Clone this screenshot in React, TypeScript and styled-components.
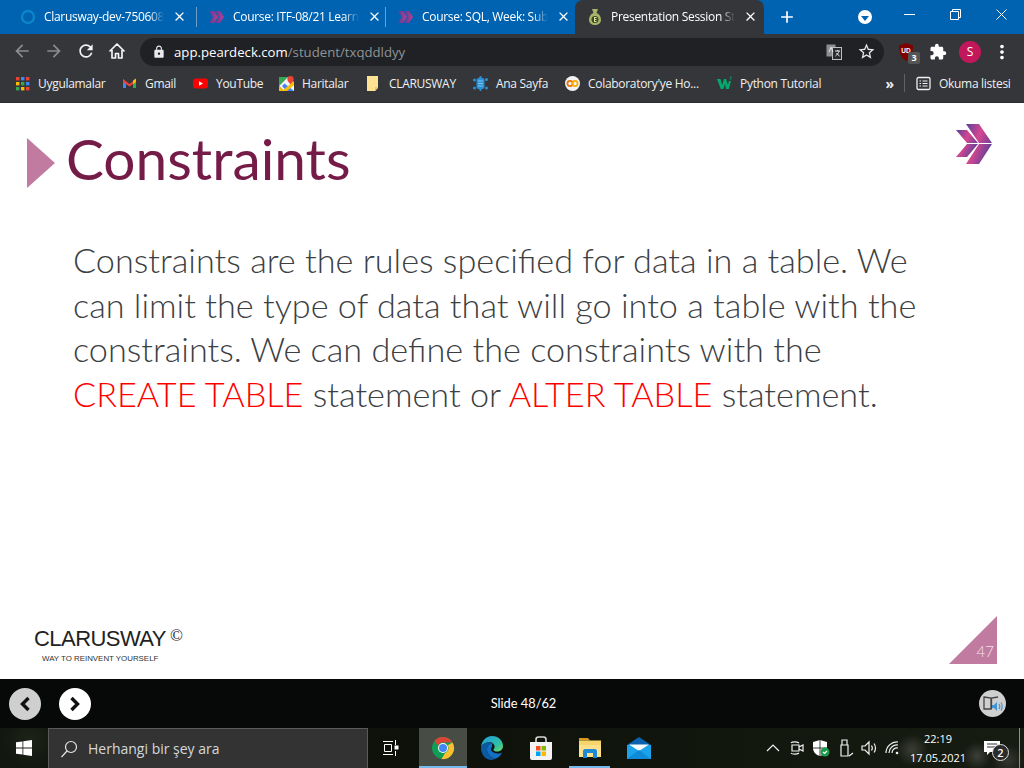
import React from 'react';
import styled, { createGlobalStyle } from 'styled-components';
import {
  MdAdd,
  MdArrowBack,
  MdArrowForward,
  MdClose,
  MdExtension,
  MdLock,
  MdMoreVert,
  MdRefresh,
  MdStarBorder,
} from 'react-icons/md';

const GlobalStyle = createGlobalStyle`
  html, body { margin: 0; padding: 0; background: #fff; }
  body { font-family: "Open Sans", "Liberation Sans", sans-serif; overflow: hidden; }
`;

const Screen = styled.div`
  width: 1024px;
  height: 768px;
  display: flex;
  flex-direction: column;
  overflow: hidden;
`;

/* ---------- browser chrome ---------- */

const TabStrip = styled.div`
  height: 34px;
  background: #0063b1;
  display: flex;
  align-items: stretch;
  padding-left: 8px;
  color: #fff;
`;

const Tab = styled.div<{ $active?: boolean; $divider?: boolean }>`
  position: relative;
  width: 189px;
  box-sizing: border-box;
  display: flex;
  align-items: center;
  padding: 0 10px 1px 12px;
  gap: 8px;
  font-size: 12px;
  background: ${(p) => (p.$active ? '#35363a' : 'transparent')};
  border-radius: ${(p) => (p.$active ? '8px 8px 0 0' : '0')};
  &::after {
    content: '';
    display: ${(p) => (p.$divider ? 'block' : 'none')};
    position: absolute;
    right: 0;
    top: 7px;
    bottom: 7px;
    width: 1px;
    background: #6d9fc9;
  }
`;

const TabIcon = styled.svg`
  width: 16px;
  height: 16px;
  flex: none;
`;

const TabTitle = styled.span`
  flex: 1;
  white-space: nowrap;
  -webkit-mask-image: linear-gradient(90deg, #000 88%, transparent 100%);
  mask-image: linear-gradient(90deg, #000 88%, transparent 100%);
  letter-spacing: -0.3px;
`;

const TabClose = styled(MdClose)`
  font-size: 15px;
  flex: none;
`;

const NewTab = styled(MdAdd)`
  font-size: 20px;
  margin: 7px 0 0 13px;
`;

const StripRight = styled.div`
  margin-left: auto;
  display: flex;
  align-items: flex-start;
`;

const ProfileMenu = styled.div`
  width: 14px;
  height: 14px;
  border-radius: 50%;
  background: #fff;
  margin: 10px 14px 0 0;
  display: flex;
  align-items: center;
  justify-content: center;
  &::after {
    content: '';
    border-left: 4px solid transparent;
    border-right: 4px solid transparent;
    border-top: 5px solid #0063b1;
    margin-top: 2px;
  }
`;

const WindowButton = styled.div`
  width: 46px;
  height: 28px;
  display: flex;
  align-items: center;
  justify-content: center;
`;

const Toolbar = styled.div`
  height: 32px;
  background: #35363a;
  display: flex;
  align-items: flex-end;
  box-sizing: border-box;
  padding-left: 12px;
  color: #fff;
`;

const NavButton = styled.div<{ $dim?: boolean }>`
  width: 32px;
  height: 30px;
  display: flex;
  align-items: center;
  justify-content: flex-start;
  font-size: 20px;
  color: ${(p) => (p.$dim ? '#8b8c8e' : '#f1f3f4')};
`;

const Omnibox = styled.div`
  width: 744px;
  height: 28px;
  background: #202124;
  border-radius: 14px;
  display: flex;
  align-items: center;
  padding: 0 2px 1px 12px;
  box-sizing: border-box;
  font-size: 13.2px;
`;

const Url = styled.span`
  margin-left: 8px;
  color: #fff;
  flex: 1;
  em { font-style: normal; color: #8f9499; }
`;

const OmniIcon = styled.div`
  width: 32px;
  display: flex;
  justify-content: center;
  align-items: center;
  color: #e8eaed;
`;

const ExtensionRow = styled.div`
  display: flex;
  align-items: center;
  height: 28px;
  margin-left: 6px;
`;

const ExtSlot = styled.div`
  position: relative;
  width: 32px;
  display: flex;
  justify-content: center;
  align-items: center;
`;

const CountBadge = styled.span`
  position: absolute;
  left: 18px;
  top: 9px;
  width: 12px;
  height: 12px;
  background: #555;
  border-radius: 2px;
  font-size: 9px;
  font-weight: 700;
  line-height: 12px;
  text-align: center;
`;

const Avatar = styled.div`
  width: 22px;
  height: 22px;
  border-radius: 50%;
  background: #c2185b;
  font-size: 12px;
  line-height: 22px;
  text-align: center;
`;

const Bookmarks = styled.div`
  height: 37px;
  background: #35363a;
  border-bottom: 1px solid #2a2b2e;
  box-sizing: border-box;
  display: flex;
  align-items: center;
  padding: 0 0 2px 15px;
  color: #eef0f1;
  font-size: 12px;
`;

const Bookmark = styled.div<{ $w: number }>`
  width: ${(p) => p.$w}px;
  flex: none;
  display: flex;
  align-items: center;
  gap: 8px;
  white-space: nowrap;
  letter-spacing: -0.3px;
`;

const BookmarkIcon = styled.svg`
  width: 15px;
  height: 15px;
  flex: none;
`;

const Chevrons = styled.span`
  margin-left: auto;
  font-size: 14px;
  font-weight: 700;
`;

const BarDivider = styled.span`
  width: 1px;
  height: 18px;
  background: #5f6368;
  margin: 0 11px 0 10px;
`;

/* ---------- slide ---------- */

const Slide = styled.main`
  flex: 1;
  background: #fff;
  display: flex;
  flex-direction: column;
`;

const SlideHead = styled.header`
  display: flex;
  align-items: flex-start;
  height: 135px;
  padding: 35px 31px 0 27px;
  box-sizing: border-box;
`;

const TitleMark = styled.div`
  width: 0;
  height: 0;
  border-left: 28px solid #c27ba0;
  border-top: 25px solid transparent;
  border-bottom: 25px solid transparent;
  margin-right: 11px;
`;

const Title = styled.h1`
  margin: -5px 0 0;
  flex: 1;
  font-family: "Lato", sans-serif;
  font-weight: 400;
  font-size: 56.8px;
  line-height: 50px;
  color: #741b47;
`;

const HeadLogo = styled.svg`
  width: 38px;
  height: 42px;
  margin-top: -15px;
`;

const Body = styled.p`
  margin: 0;
  padding-left: 73px;
  flex: 1;
  font-family: "Lato", sans-serif;
  font-weight: 300;
  font-size: 34.24px;
  line-height: 44.5px;
  color: #3c4043;
  white-space: nowrap;
`;

const Keyword = styled.span`
  color: #ff0000;
`;

const SlideFoot = styled.footer`
  display: flex;
  justify-content: space-between;
  align-items: flex-end;
  padding: 0 27px 15px 34px;
`;

const Brand = styled.div`
  color: #222;
  font-family: "Liberation Sans", sans-serif;
`;

const BrandName = styled.div`
  font-size: 22px;
  line-height: 24px;
  letter-spacing: -0.55px;
  sup {
    font-family: "Liberation Serif", serif;
    font-size: 17px;
    line-height: 0;
    vertical-align: 5px;
    margin-left: 4px;
    letter-spacing: 0;
  }
`;

const BrandTag = styled.div`
  font-size: 7.9px;
  line-height: 11px;
  margin: 2px 0 0 8px;
  color: #333;
`;

const Corner = styled.div`
  width: 48px;
  height: 48px;
  background: #c27ba0;
  clip-path: polygon(100% 0, 100% 100%, 0 100%);
  color: #f4e4ec;
  font-family: "Lato", sans-serif;
  font-weight: 300;
  font-size: 15px;
  display: flex;
  align-items: flex-end;
  justify-content: flex-end;
  padding: 0 3px 4px 0;
  box-sizing: border-box;
`;

/* ---------- deck controls ---------- */

const DeckBar = styled.div`
  height: 49px;
  background: #070909;
  display: flex;
  align-items: center;
  padding: 0 18px 0 9px;
  color: #fff;
`;

const DeckButton = styled.div<{ $on?: boolean }>`
  width: 32px;
  height: 32px;
  border-radius: 50%;
  background: ${(p) => (p.$on ? '#fff' : '#cfcfcf')};
  margin-right: 18px;
  display: flex;
  align-items: center;
  justify-content: center;
`;

const SlideCount = styled.div`
  flex: 1;
  text-align: center;
  font-family: "Lato", sans-serif;
  font-size: 12.8px;
  padding: 0 41px 1px 0;
`;

const AudioButton = styled.div`
  width: 27px;
  height: 27px;
  border-radius: 50%;
  background: #cfcfcf;
  display: flex;
  align-items: center;
  justify-content: center;
`;

/* ---------- windows taskbar ---------- */

const Taskbar = styled.div`
  height: 40px;
  display: flex;
  align-items: center;
  color: #fff;
  background:
    radial-gradient(circle at 912px 22px, #3a3d34 0, transparent 16px),
    radial-gradient(circle at 977px 28px, #3c3f38 0, transparent 14px),
    radial-gradient(circle at 1008px 32px, #34362f 0, transparent 16px),
    radial-gradient(circle at 30px 12px, #1d2318 0, transparent 30px),
    linear-gradient(90deg, #12170f, #0d1109 40%, #171c12);
`;

const StartButton = styled.div`
  width: 48px;
  display: flex;
  justify-content: center;
`;

const SearchBox = styled.div`
  width: 320px;
  height: 40px;
  box-sizing: border-box;
  background: #333;
  border: 1px solid #5a5a5a;
  border-bottom: none;
  display: flex;
  align-items: center;
  padding-left: 11px;
  gap: 10px;
  font-size: 14px;
  color: #d4d8dc;
`;

const TaskIcons = styled.div`
  display: flex;
  height: 40px;
  margin-left: 2px;
`;

const TaskItem = styled.div<{ $active?: boolean; $open?: boolean; $shift?: number }>`
  position: relative;
  width: ${(p) => (p.$active ? 48 : 49)}px;
  box-sizing: border-box;
  padding-right: ${(p) => p.$shift ?? 0}px;
  display: flex;
  align-items: center;
  justify-content: center;
  background: ${(p) => (p.$active ? '#474c44' : 'transparent')};
  &::after {
    content: '';
    display: ${(p) => (p.$active || p.$open ? 'block' : 'none')};
    position: absolute;
    left: ${(p) => (p.$open ? '4px' : '0')};
    right: ${(p) => (p.$open ? '4px' : '0')};
    bottom: 0;
    height: 2px;
    background: #76b9ed;
  }
`;

const Tray = styled.div`
  margin-left: auto;
  display: flex;
  align-items: center;
  height: 40px;
`;

const TrayIcon = styled.div`
  width: 24px;
  display: flex;
  justify-content: center;
`;

const Clock = styled.div`
  width: 58px;
  margin-left: 4px;
  text-align: center;
  font-size: 11px;
  line-height: 19px;
  white-space: nowrap;
`;

const Notify = styled.div`
  position: relative;
  width: 42px;
  margin-left: 4px;
  margin-right: 6px;
  display: flex;
  justify-content: center;
`;

const NotifyBadge = styled.span`
  position: absolute;
  left: 21px;
  top: 5px;
  width: 15px;
  height: 15px;
  border-radius: 50%;
  background: #2c2c2c;
  border: 1px solid #ddd;
  font-size: 11px;
  font-weight: 600;
  line-height: 15px;
  text-align: center;
`;

const DesktopEdge = styled.span`
  width: 1px;
  height: 40px;
  background: #8d8d8a;
  margin-right: 4px;
`;

/* ---------- drawings ---------- */

const Chevron = ({ id }: { id: string }) => (
  <TabIcon viewBox="0 0 16 16">
    <defs>
      <linearGradient id={id} x1="0" x2="1">
        <stop offset="0" stopColor="#5a3c9a" />
        <stop offset="1" stopColor="#b8408f" />
      </linearGradient>
    </defs>
    <path d="M0 2h5l4 6-4 6H0l4-6z" fill={`url(#${id})`} />
    <path d="M6 2h5l4 6-4 6H6l4-6z" fill={`url(#${id})`} />
  </TabIcon>
);

const tabs = [
  {
    title: 'Clarusway-dev-750608',
    icon: (
      <TabIcon viewBox="0 0 16 16">
        <circle cx="8" cy="8" r="6" fill="none" stroke="#0b86c9" strokeWidth="2.4" />
      </TabIcon>
    ),
    divider: true,
  },
  { title: 'Course: ITF-08/21 Learn', icon: <Chevron id="tabA" />, divider: true },
  { title: 'Course: SQL, Week: Sub', icon: <Chevron id="tabB" /> },
  {
    title: 'Presentation Session St',
    active: true,
    icon: (
      <TabIcon viewBox="0 0 16 16">
        <path d="M5 0h6L9.500 4c3 1 4.500 4 4.500 7 0 3-3 5-6 5s-6-2-6-5c0-3 1.500-6 4.500-7z" fill="#a9b46a" />
        <circle cx="8" cy="10.500" r="3.500" fill="#3d4a22" />
        <path d="M7 8h2.500v1H8v1h1.500v1H8v1h1.500v1H7z" fill="#d8df9f" />
      </TabIcon>
    ),
  },
];

const AppsIcon = () => {
  const colours = ['#ea4335', '#4285f4', '#ea4335', '#fbbc04', '#34a853', '#4285f4', '#34a853', '#fbbc04', '#ea4335'];
  return (
    <BookmarkIcon viewBox="0 0 15 15">
      {colours.map((c, i) => (
        <rect key={i} x={1 + (i % 3) * 5} y={1 + Math.floor(i / 3) * 5} width="3.4" height="3.4" fill={c} />
      ))}
    </BookmarkIcon>
  );
};

const bookmarks = [
  { label: 'Uygulamalar', w: 107, icon: <AppsIcon /> },
  {
    label: 'Gmail',
    w: 71,
    icon: (
      <BookmarkIcon viewBox="0 0 15 15">
        <path d="M1 3v9h3V6z" fill="#4285f4" />
        <path d="M14 3v9h-3V6z" fill="#34a853" />
        <path d="M1 3l6.500 5L14 3v3L7.500 10.500 1 6z" fill="#ea4335" />
        <path d="M11 4.500L14 2.600V6l-3 2.200z" fill="#fbbc04" />
      </BookmarkIcon>
    ),
  },
  {
    label: 'YouTube',
    w: 86,
    icon: (
      <BookmarkIcon viewBox="0 0 15 15">
        <rect y="2.500" width="15" height="10" rx="3" fill="#f00" />
        <path d="M6 5.200l4 2.300-4 2.300z" fill="#fff" />
      </BookmarkIcon>
    ),
  },
  {
    label: 'Haritalar',
    w: 87,
    icon: (
      <BookmarkIcon viewBox="0 0 15 15">
        <path d="M0 1h9l-9 9z" fill="#34a853" />
        <path d="M0 10L9 1l6 6v8H5z" fill="#f4f4f4" />
        <path d="M0 10l5 5H0z" fill="#fbbc04" />
        <path d="M5.500 7.500L15 15H7.500L3 10z" fill="#4285f4" />
        <path d="M3 15L15 5v4l-7 6z" fill="#fbbc04" />
        <path d="M11.500 0a3.200 3.200 0 0 1 3.200 3.200c0 2-3.200 5-3.200 5s-3.200-3-3.200-5A3.200 3.200 0 0 1 11.500 0z" fill="#ea4335" />
      </BookmarkIcon>
    ),
  },
  {
    label: 'CLARUSWAY',
    w: 107,
    icon: (
      <BookmarkIcon viewBox="0 0 15 15">
        <path d="M1 0h11v12l-3 3H1z" fill="#fde293" />
        <path d="M12 11l-3 4v-4z" fill="#e3c56a" />
      </BookmarkIcon>
    ),
  },
  {
    label: 'Ana Sayfa',
    w: 92,
    icon: (
      <BookmarkIcon viewBox="0 0 15 15">
        <g fill="#2a8fd6">
          <rect x="3.500" y="2" width="8" height="11" rx="2" />
          <circle cx="1.500" cy="4" r="1.500" />
          <circle cx="13.500" cy="3.500" r="1.500" />
          <circle cx="1.500" cy="12" r="1.500" />
          <circle cx="13.500" cy="12" r="1.500" />
          <circle cx="7.500" cy="1.200" r="1.200" />
          <circle cx="7.500" cy="13.800" r="1.200" />
        </g>
        <path d="M5 5h5M5 7.500h5M5 10h5" stroke="#7cc8f2" />
      </BookmarkIcon>
    ),
  },
  {
    label: "Colaboratory'ye Ho...",
    w: 152,
    icon: (
      <BookmarkIcon viewBox="0 0 15 15">
        <circle cx="7.500" cy="7.500" r="7.500" fill="#f2f2f2" />
        <circle cx="5" cy="7.500" r="2.600" fill="none" stroke="#e8710a" strokeWidth="1.700" />
        <circle cx="10" cy="7.500" r="2.600" fill="none" stroke="#f9ab00" strokeWidth="1.700" />
      </BookmarkIcon>
    ),
  },
  {
    label: 'Python Tutorial',
    w: 140,
    icon: (
      <BookmarkIcon viewBox="0 0 15 15">
        <path d="M0 3h3.400l1.800 6L7 3h2l1.800 6 1.200-4h2l-2.200 8h-2.600L8 8l-1.600 5H3.800z" fill="#04aa6d" />
        <path d="M12.500 1h2L13.500 2c1 0 1 1.700-.5 1.700" fill="none" stroke="#04aa6d" strokeWidth=".7" />
      </BookmarkIcon>
    ),
  },
];

const TileLogo = styled.svg`
  width: 24px;
  height: 24px;
`;

const ChromeLogo = () => (
  <TileLogo viewBox="0 0 24 24">
    <circle cx="12" cy="12" r="11" fill="#0f9d58" />
    <path d="M12 1a11 11 0 0 1 9.500 5.500H12a5.500 5.500 0 0 0-5 3.200L3.300 5A11 11 0 0 1 12 1z" fill="#db4437" />
    <path d="M21.500 6.500A11 11 0 0 1 10.500 23l3.400-5.800a5.500 5.500 0 0 0 2.800-8z" fill="#fbc02d" />
    <circle cx="12" cy="12" r="5" fill="#fff" />
    <circle cx="12" cy="12" r="4" fill="#4285f4" />
  </TileLogo>
);

const EdgeLogo = () => (
  <TileLogo viewBox="0 0 24 24">
    <defs>
      <linearGradient id="edgeTop" x1="0" y1="0" x2="1" y2="1">
        <stop offset="0" stopColor="#1b9de2" />
        <stop offset="0.7" stopColor="#35c1a0" />
        <stop offset="1" stopColor="#7bdc5c" />
      </linearGradient>
    </defs>
    <path d="M1 12C1 5 6 0 12 0c6.500 0 11 4.600 11 10 0 3.600-3 5.600-6 5.600-2 0-3.600-.7-3.600-1.800 0-.8 1.200-1.200 1.200-3 0-2.600-2.300-4.500-5-4.500C5 6.300 1 9 1 12z" fill="url(#edgeTop)" />
    <path d="M1 12c0-3 4-5.700 8.600-5.700 1 0 2 .3 2.800.8-3 .3-5.400 3-5.400 6.400 0 4 3 8 8.500 9.300C14 23.400 13 24 11.500 24 5.500 24 1 18.500 1 12z" fill="#0c59a4" />
    <path d="M12.400 7.100c-3 .3-5.400 3-5.400 6.400 0 4 3 8 8.500 9.300 2.800-.9 5.500-3.300 6.500-6.300-1 .6-2.400 1-4 1-4.500 0-7-2.600-7-4.200 0-1 .7-1.500 1.200-2.800-.1-1.500-.1-2.400.2-3.400z" fill="#1170c4" />
  </TileLogo>
);

const StoreLogo = () => (
  <TileLogo viewBox="0 0 24 24">
    <path d="M7 7V3.500C7 2 8 1 9.500 1h5C16 1 17 2 17 3.500V7" fill="none" stroke="#d8d8d8" strokeWidth="1.600" />
    <path d="M1 6h22v16a2 2 0 0 1-2 2H3a2 2 0 0 1-2-2z" fill="#f3f3f3" />
    <rect x="7" y="10" width="4.500" height="4.500" fill="#f25022" />
    <rect x="12.500" y="10" width="4.500" height="4.500" fill="#7fba00" />
    <rect x="7" y="15.500" width="4.500" height="4.500" fill="#00a4ef" />
    <rect x="12.500" y="15.500" width="4.500" height="4.500" fill="#ffb900" />
  </TileLogo>
);

const ExplorerLogo = () => (
  <TileLogo viewBox="0 0 24 24">
    <path d="M1 2h9l2 2.500H1z" fill="#d99a1c" />
    <path d="M1 4.500h22V20H1z" fill="#f8d56b" />
    <path d="M1 9h22v12H1z" fill="#ffe08a" />
    <path d="M5 22v-7c0-1 1-2 2-2h10c1 0 2 1 2 2v7h-4v-5H9v5z" fill="#1c8ad4" />
  </TileLogo>
);

const MailLogo = () => (
  <TileLogo viewBox="0 0 24 24">
    <path d="M12 1l12 8v14H0V9z" fill="#0a62b0" />
    <path d="M0 9h24v14H0z" fill="#1aa3ea" />
    <path d="M2 8.500h20L12 15z" fill="#f5fbff" />
    <path d="M0 23L12 14l12 9z" fill="#0f8ad6" />
  </TileLogo>
);

const TrayGlyph = styled.svg`
  width: 18px;
  height: 18px;
  fill: none;
  stroke: #f2f2f2;
  stroke-width: 1.2;
`;

export default function App() {
  return (
    <Screen>
      <GlobalStyle />
      <TabStrip>
        {tabs.map((t) => (
          <Tab key={t.title} $active={t.active} $divider={t.divider}>
            {t.icon}
            <TabTitle>{t.title}</TabTitle>
            <TabClose />
          </Tab>
        ))}
        <NewTab />
        <StripRight>
          <ProfileMenu />
          <WindowButton>
            <svg width="11" height="11" viewBox="0 0 11 11">
              <path d="M0 5.500h11" stroke="#fff" />
            </svg>
          </WindowButton>
          <WindowButton>
            <svg width="11" height="11" viewBox="0 0 11 11" fill="none" stroke="#fff">
              <path d="M.5 2.500h8v8h-8zM2.500 2.500v-2h8v8h-2" />
            </svg>
          </WindowButton>
          <WindowButton>
            <svg width="11" height="11" viewBox="0 0 11 11" stroke="#fff">
              <path d="M.5.500l10 10M10.500.500l-10 10" />
            </svg>
          </WindowButton>
        </StripRight>
      </TabStrip>

      <Toolbar>
        <NavButton $dim><MdArrowBack /></NavButton>
        <NavButton $dim><MdArrowForward /></NavButton>
        <NavButton><MdRefresh /></NavButton>
        <NavButton>
          <svg width="18" height="18" viewBox="0 0 18 18" fill="none" stroke="#f1f3f4" strokeWidth="1.700">
            <path d="M1.500 9.500L9 2l7.500 7.500M4 8v8h3.500v-4.500h3V16H14V8" strokeLinejoin="round" />
          </svg>
        </NavButton>
        <Omnibox>
          <MdLock size={14} color="#e8eaed" />
          <Url>app.peardeck.com<em>/student/txqddldyy</em></Url>
          <OmniIcon>
            <svg width="16" height="16" viewBox="0 0 16 16">
              <rect x="0.500" y="0.500" width="9" height="12" fill="#8d8f91" />
              <rect x="6.500" y="3.500" width="9" height="12" fill="#2a2b2e" stroke="#bdbfc1" />
              <path d="M3 8l2-5 2 5M9 7h5M11.500 6v1M13 7c-.5 2-2 4-3.500 5M10.500 9c.8 1.200 2 2.300 3 3" stroke="#e5e5e5" fill="none" />
            </svg>
          </OmniIcon>
          <OmniIcon><MdStarBorder size={19} /></OmniIcon>
        </Omnibox>
        <ExtensionRow>
          <ExtSlot>
            <svg width="16" height="18" viewBox="0 0 16 18">
              <path d="M8 0l7 2.500c0 7-1.500 12-7 15.500C2.500 14.500 1 9.500 1 2.500z" fill="#800000" />
              <text x="8" y="9.500" fontSize="6.500" fontWeight="700" fill="#fff" textAnchor="middle" fontFamily="Liberation Sans">UD</text>
            </svg>
            <CountBadge>3</CountBadge>
          </ExtSlot>
          <ExtSlot><MdExtension size={18} /></ExtSlot>
          <ExtSlot><Avatar>S</Avatar></ExtSlot>
          <ExtSlot><MdMoreVert size={22} /></ExtSlot>
        </ExtensionRow>
      </Toolbar>

      <Bookmarks>
        {bookmarks.map((b) => (
          <Bookmark key={b.label} $w={b.w}>
            {b.icon}
            <span>{b.label}</span>
          </Bookmark>
        ))}
        <Chevrons>»</Chevrons>
        <BarDivider />
        <Bookmark $w={108}>
          <BookmarkIcon viewBox="0 0 15 15" fill="none" stroke="#eef0f1">
            <rect x="1" y="1.500" width="13" height="12" rx="1.500" strokeWidth="1.300" />
            <path d="M3.500 5h1.500M6.500 5h5M3.500 7.500h1.500M6.500 7.500h5M3.500 10h1.500M6.500 10h5" />
          </BookmarkIcon>
          <span>Okuma listesi</span>
        </Bookmark>
      </Bookmarks>

      <Slide>
        <SlideHead>
          <TitleMark />
          <Title>Constraints</Title>
          <HeadLogo viewBox="0 0 38 42">
            <defs>
              <linearGradient id="headLogo" x1="0" x2="1" y1="0" y2="0.600">
                <stop offset="0" stopColor="#5b3f9c" />
                <stop offset="0.5" stopColor="#d6478f" />
                <stop offset="1" stopColor="#5b3f9c" />
              </linearGradient>
            </defs>
            <path d="M1 7h11l11 13H12zM1 34h11l11-13H12z" fill="url(#headLogo)" />
            <path d="M11 1h13l13 19H24zM11 41h13l13-20H24z" fill="url(#headLogo)" />
          </HeadLogo>
        </SlideHead>
        <Body>
          Constraints are the rules specified for data in a table. We<br />
          can limit the type of data that will go into a table with the<br />
          constraints. We can define the constraints with the<br />
          <Keyword>CREATE TABLE</Keyword> statement or <Keyword>ALTER TABLE</Keyword> statement.
        </Body>
        <SlideFoot>
          <Brand>
            <BrandName>CLARUSWAY<sup>©</sup></BrandName>
            <BrandTag>WAY TO REINVENT YOURSELF</BrandTag>
          </Brand>
          <Corner>47</Corner>
        </SlideFoot>
      </Slide>

      <DeckBar>
        <DeckButton>
          <svg width="12" height="16" viewBox="0 0 12 16" fill="none" stroke="#111" strokeWidth="3.400">
            <path d="M9.500 2L3.500 8l6 6" />
          </svg>
        </DeckButton>
        <DeckButton $on>
          <svg width="12" height="16" viewBox="0 0 12 16" fill="none" stroke="#111" strokeWidth="3.400">
            <path d="M2.500 2l6 6-6 6" />
          </svg>
        </DeckButton>
        <SlideCount>Slide 48/62</SlideCount>
        <AudioButton>
          <svg width="20" height="18" viewBox="0 0 20 18" fill="none">
            <path d="M1 2l7 1v11H1zM15 2L8.500 3v3M8.500 3v11" stroke="#444" strokeWidth="1.300" />
            <path d="M9 10h2l3-3v9l-3-3H9z" fill="#3d94d9" />
            <path d="M16 9c1 1.500 1 3.500 0 5M18 7.500c1.500 2.500 1.500 5.500 0 8" stroke="#3d94d9" strokeWidth="1.200" />
          </svg>
        </AudioButton>
      </DeckBar>

      <Taskbar>
        <StartButton>
          <svg width="16" height="16" viewBox="0 0 16 16" fill="#fff">
            <path d="M0 2.300l6.500-.9v6.200H0zM7.300 1.300L16 0v7.600H7.300zM0 8.400h6.500v6.200L0 13.700zM7.300 8.400H16V16l-8.700-1.200z" />
          </svg>
        </StartButton>
        <SearchBox>
          <svg width="18" height="18" viewBox="0 0 18 18" fill="none" stroke="#e6e6e6" strokeWidth="1.200">
            <circle cx="11" cy="7" r="5.500" />
            <path d="M7 11l-5.500 6" />
          </svg>
          Herhangi bir şey ara
        </SearchBox>
        <TaskIcons>
          <TaskItem $shift={7}>
            <svg width="16" height="16" viewBox="0 0 16 16" fill="none" stroke="#fff">
              <path d="M0 1.500h10M0 14.500h10M1.500 4.500h7v7h-7z" />
              <path d="M12.500 0v5M12.500 11v5" />
              <rect x="12" y="6" width="3" height="3" fill="#fff" />
            </svg>
          </TaskItem>
          <TaskItem $active><ChromeLogo /></TaskItem>
          <TaskItem><EdgeLogo /></TaskItem>
          <TaskItem><StoreLogo /></TaskItem>
          <TaskItem $open><ExplorerLogo /></TaskItem>
          <TaskItem><MailLogo /></TaskItem>
        </TaskIcons>
        <Tray>
          <TrayIcon>
            <TrayGlyph viewBox="0 0 18 18"><path d="M3 12l6-6 6 6" /></TrayGlyph>
          </TrayIcon>
          <TrayIcon>
            <TrayGlyph viewBox="0 0 18 18">
              <path d="M4 6h7v6H4zM11 8l4-2v6l-4-2M3 4c1-1.500 6-1.500 8 0M3 14c1 1.500 6 1.500 8 0" />
            </TrayGlyph>
          </TrayIcon>
          <TrayIcon>
            <TrayGlyph viewBox="0 0 18 18">
              <path d="M8 1l7 2v6c0 4-3 7-7 8-4-1-7-4-7-8V3z" fill="#fff" stroke="none" />
              <path d="M8 1v16M1 9h14" stroke="#111" strokeWidth=".8" />
              <circle cx="13" cy="13" r="4.500" fill="#1a9c4a" stroke="none" />
              <path d="M11 13l1.500 1.500L15 12" stroke="#fff" />
            </TrayGlyph>
          </TrayIcon>
          <TrayIcon>
            <TrayGlyph viewBox="0 0 18 18">
              <path d="M5 6h7v11H5zM6 1h5v5H6zM13 17l4-3" />
            </TrayGlyph>
          </TrayIcon>
          <TrayIcon>
            <TrayGlyph viewBox="0 0 18 18">
              <path d="M2 7h3l4-4v12l-4-4H2zM11.500 6.500c1 1.500 1 3.500 0 5M14 4.500c2 2.500 2 6.500 0 9" />
            </TrayGlyph>
          </TrayIcon>
          <TrayIcon>
            <TrayGlyph viewBox="0 0 18 18">
              <path d="M2 14A11 11 0 0 1 14 3M5 14a8 8 0 0 1 9-8M8 14a5 5 0 0 1 6-5" />
              <circle cx="13" cy="14" r="1.300" fill="#f2f2f2" stroke="none" />
            </TrayGlyph>
          </TrayIcon>
          <Clock>22:19<br />17.05.2021</Clock>
          <Notify>
            <TrayGlyph viewBox="0 0 18 18">
              <path d="M1 2h16v11H7l-3 3v-3H1z" fill="#fff" stroke="none" />
              <path d="M4 5h10M4 8h10" stroke="#333" />
            </TrayGlyph>
            <NotifyBadge>2</NotifyBadge>
          </Notify>
          <DesktopEdge />
        </Tray>
      </Taskbar>
    </Screen>
  );
}
